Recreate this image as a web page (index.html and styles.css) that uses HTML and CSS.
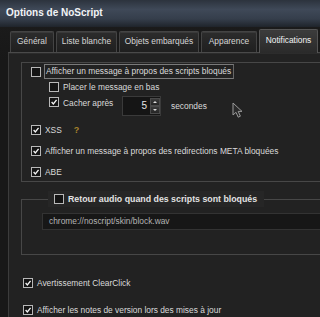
FILE: index.html
```html
<html>

<head>
	<title>Options de NoScript</title>
	<link rel="stylesheet" href="styles.css">
</head>

<body>
	<div class="window">
		<div class="titlebar">Options de NoScript</div>
		<div class="tabs">
			<div class="tab tab--general">Général</div>
			<div class="tab tab--white">Liste blanche</div>
			<div class="tab tab--embed">Objets embarqués</div>
			<div class="tab tab--look">Apparence</div>
			<div class="tab tab--active">Notifications</div>
		</div>
		<div class="panel">
			<div class="group">
				<div class="row row--first">
					<span class="check"></span>
					<span class="label label--focus">Afficher un message à propos des scripts bloqués</span>
				</div>
				<div class="row row--sub">
					<span class="check"></span>
					<span class="label">Placer le message en bas</span>
				</div>
				<div class="row row--sub row--spin">
					<span class="check check--on check--top"><svg viewBox="0 0 10 10"><polyline points="2,5 4.2,7.4 8.2,2.4" /></svg></span>
					<span class="label label--hide">Cacher après</span>
					<div class="spinner">
						<span class="spinner__value">5</span>
						<div class="spinner__buttons">
							<span class="spinner__btn"><i class="arrow arrow--up"></i></span>
							<span class="spinner__btn"><i class="arrow arrow--down"></i></span>
						</div>
					</div>
					<span class="label label--unit">secondes</span>
				</div>
				<div class="row row--gap">
					<span class="check check--on"><svg viewBox="0 0 10 10"><polyline points="2,5 4.2,7.4 8.2,2.4" /></svg></span>
					<span class="label">XSS</span>
					<span class="help">?</span>
				</div>
				<div class="row row--gap">
					<span class="check check--on"><svg viewBox="0 0 10 10"><polyline points="2,5 4.2,7.4 8.2,2.4" /></svg></span>
					<span class="label">Afficher un message à propos des redirections META bloquées</span>
				</div>
				<div class="row row--gap">
					<span class="check check--on"><svg viewBox="0 0 10 10"><polyline points="2,5 4.2,7.4 8.2,2.4" /></svg></span>
					<span class="label">ABE</span>
				</div>
			</div>

			<fieldset class="audio">
				<legend class="audio__legend">
					<span class="check"></span>
					<span class="label label--bold">Retour audio quand des scripts sont bloqués</span>
				</legend>
				<div class="input">chrome://noscript/skin/block.wav</div>
			</fieldset>

			<div class="row row--outer row--clear">
				<span class="check check--on"><svg viewBox="0 0 10 10"><polyline points="2,5 4.2,7.4 8.2,2.4" /></svg></span>
				<span class="label">Avertissement ClearClick</span>
			</div>
			<div class="row row--outer row--notes">
				<span class="check check--on"><svg viewBox="0 0 10 10"><polyline points="2,5 4.2,7.4 8.2,2.4" /></svg></span>
				<span class="label">Afficher les notes de version lors des mises à jour</span>
			</div>
		</div>

		<svg class="cursor" viewBox="0 0 12 17" width="12" height="17">
			<path d="M1 1 L1 13 L4 10.3 L6.2 15.2 L8.4 14.2 L6.2 9.4 L10 9.4 Z" />
		</svg>
	</div>
</body>

</html>
```

FILE: styles.css
```css
* {
	margin: 0;
	padding: 0;
	box-sizing: border-box;
}

body {
	width: 320px;
	height: 317px;
	overflow: hidden;
	background-color: #1b1b1b;
	font-family: "Liberation Sans", Arial, sans-serif;
	font-size: 8.4px;
	color: #dadada;
}

.window {
	position: relative;
	width: 320px;
	height: 317px;
	overflow: hidden;
	background: linear-gradient(#1d1d1d, #181818 60px);
}

.titlebar {
	height: 27px;
	padding-left: 6px;
	line-height: 25px;
	font-size: 10px;
	font-weight: bold;
	color: #f2f4f6;
	background: linear-gradient(#2c333d, #3f4958 35%, #353e4b 70%, #1f242b);
}

.tabs {
	display: flex;
	align-items: flex-end;
	height: 25px;
	padding-left: 10px;
}

.tab {
	height: 21px;
	margin-right: 2px;
	line-height: 19px;
	text-align: center;
	color: #d6d6d6;
	background: linear-gradient(#2c2c2c, #1f1f1f);
	border: 1px solid #444;
	border-bottom: none;
	border-radius: 2px 2px 0 0;
	box-shadow: inset 0 1px 0 #3a3a3a;
}

.tab--general {
	width: 44px;
}

.tab--white {
	width: 61px;
}

.tab--embed {
	width: 80px;
}

.tab--look {
	width: 56px;
}

.tab--active {
	width: 59px;
	height: 24px;
	margin-bottom: -1px;
	line-height: 21px;
	color: #f4f4f4;
	background: linear-gradient(#3c3c3c, #2a2a2a);
	border-color: #555;
	position: relative;
	z-index: 1;
}

.panel {
	width: 340px;
	height: 270px;
	margin-left: 8px;
	padding-left: 12px;
	padding-top: 9px;
	background-color: #222;
	border-top: 1px solid #4a4a4a;
	border-left: 1px solid #3c3c3c;
	box-shadow: inset 0 1px 0 #2c2c2c;
}

.group {
	border: 1px solid #474747;
	border-right: none;
	padding-left: 9px;
	padding-bottom: 2px;
}

.row {
	display: flex;
	align-items: center;
	height: 15px;
}

.row--first {
	margin-top: 1px;
}

.row--sub {
	padding-left: 18px;
}

.row--spin {
	height: 21px;
	margin-top: 1px;
}

.row--gap {
	margin-top: 6px;
}

.check {
	flex: none;
	width: 10px;
	height: 10px;
	margin-right: 4px;
	background-color: #141414;
	border: 1px solid #b8b8b8;
}

.check--top {
	align-self: flex-start;
	margin-top: 2px;
}

.check svg {
	display: block;
	width: 8px;
	height: 8px;
}

.check svg polyline {
	fill: none;
	stroke: #f4f4f4;
	stroke-width: 1.7;
}

.label {
	white-space: nowrap;
}

.label--focus {
	padding: 1px 2px 2px 1px;
	margin-left: -1px;
	border: 1px solid #7a7a7a;
	border-right-color: #666;
}

.label--hide {
	width: 59px;
	align-self: flex-start;
	margin-top: 3px;
}

.label--unit {
	margin-left: 10px;
}

.label--bold {
	font-size: 8.8px;
	font-weight: bold;
	color: #e2e2e2;
}

.help {
	margin-left: 12px;
	font-size: 9px;
	font-weight: bold;
	color: #a8842c;
}

.spinner {
	display: flex;
	width: 39px;
	height: 20px;
	background-color: #151515;
	border: 1px solid #3a3a3a;
}

.spinner__value {
	flex: 1;
	padding-right: 3px;
	text-align: right;
	font-size: 10px;
	line-height: 18px;
	color: #e6e6e6;
}

.spinner__buttons {
	display: flex;
	flex-direction: column;
	justify-content: space-between;
	width: 10px;
	padding: 1px 0;
}

.spinner__btn {
	display: flex;
	align-items: center;
	justify-content: center;
	height: 8px;
	background: linear-gradient(#3a3a3a, #262626);
	border: 1px solid #4a4a4a;
}

.arrow {
	width: 0;
	height: 0;
	border-left: 2px solid transparent;
	border-right: 2px solid transparent;
}

.arrow--up {
	border-bottom: 2px solid #dcdcdc;
}

.arrow--down {
	border-top: 2px solid #dcdcdc;
}

.audio {
	margin-top: 9px;
	padding: 0 0 24px 20px;
	border: 1px solid #474747;
	border-right: none;
	min-width: 0;
}

.audio__legend {
	display: flex;
	align-items: center;
	height: 16px;
	margin-left: 6px;
	padding: 0 7px 0 6px;
	background-color: #262626;
}

.audio__legend .check {
	margin-right: 4px;
}

.input {
	height: 17px;
	margin-top: 6px;
	padding-left: 6px;
	line-height: 15px;
	color: #b4b4b4;
	background-color: #171717;
	border: 1px solid #333;
	white-space: nowrap;
}

.row--outer {
	margin-left: 2px;
}

.row--clear {
	margin-top: 20px;
}

.row--notes {
	margin-top: 12px;
}

.cursor {
	position: absolute;
	left: 232px;
	top: 102px;
}

.cursor path {
	fill: #2a2a2a;
	stroke: #9a9a9a;
	stroke-width: 1;
}
```
